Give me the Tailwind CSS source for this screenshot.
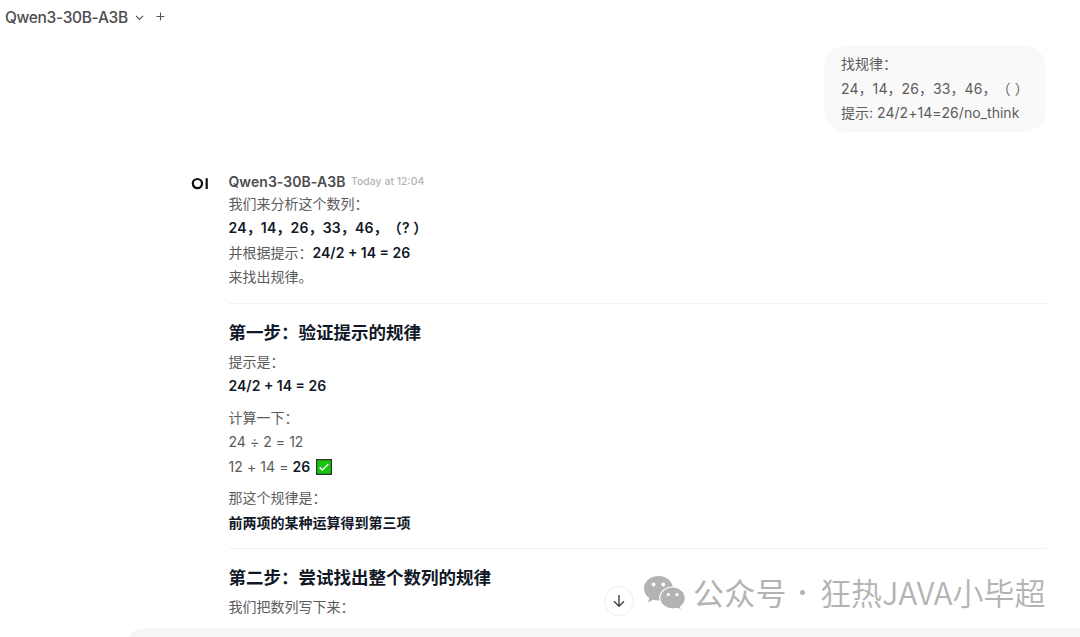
<!DOCTYPE html>
<html lang="zh-CN">
<head>
    <meta charset="UTF-8">
    <meta name="viewport" content="width=device-width, initial-scale=1.0">
    <title>Qwen3-30B-A3B</title>
    <script src="https://cdn.jsdelivr.net/npm/@tailwindcss/browser@4"></script>
</head>
<body class="relative h-[637px] overflow-hidden bg-white font-['Inter','Noto_Sans_CJK_SC',sans-serif] text-sm text-[#5c5c5c] [text-spacing-trim:space-all]">
    <!-- Model selector -->
    <header class="flex h-[35px] items-center pl-[5px]">
        <span class="pt-px text-[15.5px] font-[450] tracking-[-0.33px] text-[#4d4d4d]">Qwen3-30B-A3B</span>
        <svg class="ml-[7px] size-[9px]" viewBox="0 0 9 9" fill="none" stroke="#555" stroke-width="1.2"><path d="M1 2.8 4.5 6.3 8 2.8"/></svg>
        <svg class="mb-0.5 ml-3 size-[9px]" viewBox="0 0 9 9" fill="none" stroke="#555" stroke-width="1.1"><path d="M4.5 .5v8M.5 4.5h8"/></svg>
    </header>

    <main class="pr-[34px] pl-[191px]">
        <!-- User message -->
        <div class="flex justify-end pt-[10px]">
            <div class="h-[87px] w-[222px] rounded-[22px] bg-[#f9f9f9] pt-[7px] pl-[17px] leading-[24.5px] whitespace-nowrap">
                <p>找规律：</p>
                <p class="tracking-[0.08px]">24，14，26，33，46，（ ）</p>
                <p class="tracking-[0.03px]">提示: 24/2+14=26/no_think</p>
            </div>
        </div>

        <!-- Model reply -->
        <div class="mt-[39px] flex">
            <svg class="mt-1 h-5 w-[37.5px] shrink-0" viewBox="0 0 37.5 20" fill="none" stroke="#111" stroke-width="2.2"><circle cx="6.4" cy="8.6" r="4.6"/><path d="M15.7 3.2v10.8"/></svg>
            <div class="min-w-0 flex-1 leading-[24.5px]">
                <div class="flex h-[20.5px] items-center">
                    <span class="pt-px text-[14px] font-semibold tracking-[0.05px] text-[#4d4d4d]">Qwen3-30B-A3B</span>
                    <span class="mt-0.5 ml-[5.5px] text-[10.5px] font-medium text-[#b4b4b4]">Today at 12:04</span>
                </div>
                <p>我们来分析这个数列：</p>
                <p class="font-semibold tracking-[0.16px] text-[#111827]">24，14，26，33，46，（? ）</p>
                <p>并根据提示：<strong class="font-semibold text-[#111827]">24/2 + 14 = 26</strong></p>
                <p>来找出规律。</p>
                <hr class="mt-[13.5px] border-[#f1f1f1]">

                <h3 class="mt-[14px] text-[17.5px] leading-[29px] font-bold text-[#111827]">第一步：验证提示的规律</h3>
                <p class="mt-[2.5px]">提示是：</p>
                <p class="font-semibold text-[#111827]">24/2 + 14 = 26</p>
                <p class="mt-[7px]">计算一下：</p>
                <p class="tracking-[0.05px]">24 ÷ 2 = 12</p>
                <p class="flex items-center tracking-[0.08px] whitespace-pre">12 + 14 = <strong class="font-semibold text-[#111827]">26</strong><svg class="ml-[6px] size-4" viewBox="0 0 16 16"><path d="M.6.6h14.8v14.8H.6z" fill="#16c60c" stroke="#333" stroke-width="1.2"/><path d="m3.6 8.3 2.7 2.6 6-6" fill="none" stroke="#fff" stroke-width="1.4"/></svg></p>
                <p class="mt-[7px]">那这个规律是：</p>
                <p class="font-bold text-[#111827]">前两项的某种运算得到第三项</p>
                <hr class="mt-[12.5px] border-[#f1f1f1]">

                <h3 class="mt-[14px] text-[17.5px] leading-[29px] font-bold text-[#111827]">第二步：尝试找出整个数列的规律</h3>
                <p class="mt-[3px]">我们把数列写下来：</p>
            </div>
        </div>
    </main>

    <!-- Scroll to bottom -->
    <button class="absolute top-[585.5px] left-[604px] flex size-[30px] items-center justify-center rounded-full border border-[#ececec] bg-white">
        <svg class="size-3" viewBox="0 0 12 12" fill="none" stroke="#444" stroke-width="1.4"><path d="M6 0v11.3M1 6.3l5 5 5-5"/></svg>
    </button>

    <!-- Watermark -->
    <div class="absolute top-[568px] left-[643px] flex h-[48px] items-center whitespace-nowrap text-[#b3b3b3]">
        <svg class="h-[36px] w-[44px]" viewBox="0 0 44 36">
            <path d="M15.5 2C7.2 2 1 7.5 1 14.5c0 4 2 7.3 5.3 9.5L5 28.5l5.200-2.700c2 .6 4 .9 6.500.8C23.500 26.500 30 21 30 14.500S23.800 2 15.500 2z" fill="currentColor"/>
            <path d="M29.5 13c-7 0-12.7 4.9-12.7 11s5.7 11 12.7 11c1.7 0 3.4-.3 4.9-.8l4.4 2.2-1.2-3.7c2.9-2 4.7-5.2 4.7-8.7 0-6.100-5.800-11-12.800-11z" fill="currentColor" stroke="#fff" stroke-width="1.2"/>
            <g fill="#fff"><circle cx="10.6" cy="10.5" r="1.9"/><circle cx="20.3" cy="10.5" r="1.9"/><circle cx="25.3" cy="20.6" r="1.6"/><circle cx="34" cy="20.6" r="1.6"/></g>
        </svg>
        <span class="ml-[6px] w-[95px] font-['Noto_Sans_CJK_SC',sans-serif] text-[31px] tracking-[0.3px]">公众号</span>
        <span class="ml-[12px] size-[5px] rounded-full bg-[#b3b3b3]"></span>
        <span class="ml-[15px] font-['Noto_Sans_CJK_SC',sans-serif] text-[31px] font-[350]">狂热JAVA小毕超</span>
    </div>

    <!-- Message input -->
    <div class="absolute top-[628px] left-[129px] h-[9px] w-[951px] rounded-tl-[18px_9px] bg-[#f6f6f6]"></div>
</body>
</html>
